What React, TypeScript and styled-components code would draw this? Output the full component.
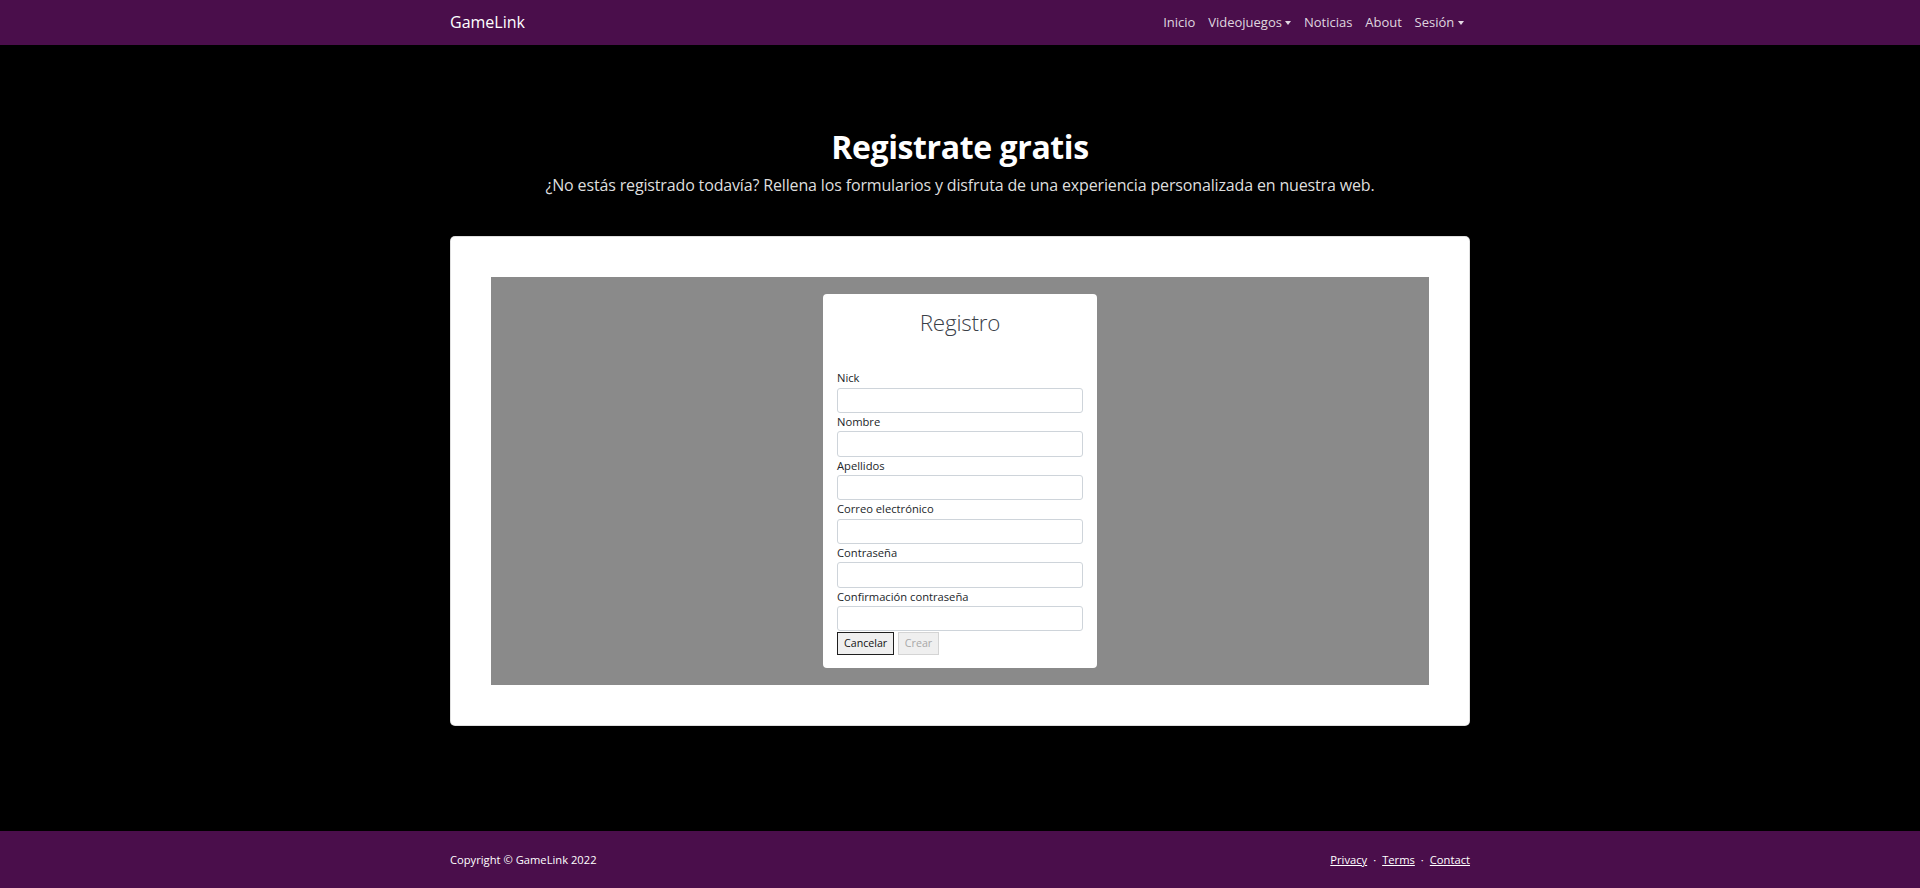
import React from "react";
import styled, { createGlobalStyle } from "styled-components";

const PURPLE = "#4a0e4b";

const GlobalStyle = createGlobalStyle`
  html, body {
    margin: 0;
    padding: 0;
    background: #000;
    font-family: "Open Sans", "Noto Sans", sans-serif;
  }
  * { box-sizing: border-box; }
`;

const Page = styled.div`
  min-height: 100vh;
  display: flex;
  flex-direction: column;
`;

const Bar = styled.nav`
  height: 45px;
  background: ${PURPLE};
  flex-shrink: 0;
`;

const Container = styled.div`
  width: 1020px;
  height: 100%;
  margin: 0 auto;
  display: flex;
  align-items: center;
  justify-content: space-between;
`;

const Brand = styled.a`
  color: #fff;
  font-size: 16px;
  text-decoration: none;
  margin-top: -1px;
`;

const NavList = styled.ul`
  list-style: none;
  margin: 0;
  padding: 0;
  display: flex;
`;

const NavLink = styled.a`
  display: flex;
  align-items: center;
  padding: 0 6.4px;
  font-size: 13px;
  line-height: 19px;
  color: rgba(255, 255, 255, 0.84);
  text-decoration: none;
`;

const Caret = styled.span`
  display: inline-block;
  margin-left: 3.3px;
  border-top: 4px solid currentColor;
  border-left: 3.9px solid transparent;
  border-right: 3.9px solid transparent;
`;

const Main = styled.main`
  flex: 1;
  padding-top: 82.5px;
`;

const Header = styled.header`
  text-align: center;
`;

const Title = styled.h1`
  margin: 0;
  font-size: 32px;
  line-height: 38.4px;
  font-weight: 700;
  letter-spacing: -0.4px;
  color: #fff;
`;

const Lead = styled.p`
  margin: 7.5px 0 0;
  font-size: 16px;
  line-height: 24px;
  letter-spacing: -0.15px;
  color: #dedede;
`;

const Card = styled.section`
  width: 1020px;
  margin: 38.6px auto 0;
  background: #fff;
  border-radius: 5px;
  border: 1px solid rgba(0, 0, 0, 0.125);
  padding: 40px;
`;

const GrayPanel = styled.div`
  background: #8a8a8a;
  padding: 17px 0;
  display: flex;
  justify-content: center;
`;

const FormCard = styled.form`
  width: 274px;
  background: #fff;
  border-radius: 4px;
  padding: 14.5px 14px 13.6px;
`;

const FormTitle = styled.h3`
  margin: 0 0 32px;
  text-align: center;
  font-size: 22.4px;
  line-height: 28.8px;
  font-weight: 300;
  letter-spacing: -0.2px;
  color: #3a4047;
`;

const Label = styled.label`
  display: block;
  font-size: 11.2px;
  line-height: 18.3px;
  color: #212529;
`;

const Input = styled.input`
  display: block;
  width: 100%;
  height: 25.4px;
  margin: 0;
  border: 1px solid #ced4da;
  border-radius: 3px;
  background: #fff;
  padding: 0 6px;
  font-size: 11px;
`;

const Buttons = styled.div`
  display: flex;
  gap: 3.6px;
  margin-top: 0.7px;
`;

const Btn = styled.button<{ $disabled?: boolean }>`
  height: 22.7px;
  padding: 0 6px;
  font-family: "Open Sans", "Noto Sans", sans-serif;
  font-size: 10.67px;
  border-radius: 0;
  background: #efefef;
  border: 1px solid ${(p) => (p.$disabled ? "#d4d4d4" : "#1f1f1f")};
  color: ${(p) => (p.$disabled ? "#a8a8a8" : "#111")};
`;

const Foot = styled.footer`
  height: 57px;
  background: ${PURPLE};
  flex-shrink: 0;
`;

const Copy = styled.div`
  font-size: 11.2px;
  color: #fff;
`;

const FootLinks = styled.div`
  display: flex;
  align-items: center;
  font-size: 11.2px;
  color: #fff;
`;

const FootLink = styled.a`
  color: #fff;
  text-decoration: underline;
`;

const Dot = styled.span`
  margin: 0 6px;
`;

const fields = [
  "Nick",
  "Nombre",
  "Apellidos",
  "Correo electrónico",
  "Contraseña",
  "Confirmación contraseña",
];

export default function App() {
  return (
    <>
      <GlobalStyle />
      <Page>
        <Bar>
          <Container>
            <Brand href="#">GameLink</Brand>
            <NavList>
              <li><NavLink href="#">Inicio</NavLink></li>
              <li><NavLink href="#">Videojuegos<Caret /></NavLink></li>
              <li><NavLink href="#">Noticias</NavLink></li>
              <li><NavLink href="#">About</NavLink></li>
              <li><NavLink href="#">Sesión<Caret /></NavLink></li>
            </NavList>
          </Container>
        </Bar>
        <Main>
          <Header>
            <Title>Registrate gratis</Title>
            <Lead>
              ¿No estás registrado todavía? Rellena los formularios y disfruta de una experiencia personalizada en nuestra web.
            </Lead>
          </Header>
          <Card>
            <GrayPanel>
              <FormCard onSubmit={(e) => e.preventDefault()}>
                <FormTitle>Registro</FormTitle>
                {fields.map((f) => (
                  <div key={f}>
                    <Label>{f}</Label>
                    <Input type={f.startsWith("Contra") || f.startsWith("Confirm") ? "password" : "text"} />
                  </div>
                ))}
                <Buttons>
                  <Btn type="button">Cancelar</Btn>
                  <Btn type="button" $disabled disabled>Crear</Btn>
                </Buttons>
              </FormCard>
            </GrayPanel>
          </Card>
        </Main>
        <Foot>
          <Container>
            <Copy>Copyright © GameLink 2022</Copy>
            <FootLinks>
              <FootLink href="#">Privacy</FootLink>
              <Dot>·</Dot>
              <FootLink href="#">Terms</FootLink>
              <Dot>·</Dot>
              <FootLink href="#">Contact</FootLink>
            </FootLinks>
          </Container>
        </Foot>
      </Page>
    </>
  );
}
